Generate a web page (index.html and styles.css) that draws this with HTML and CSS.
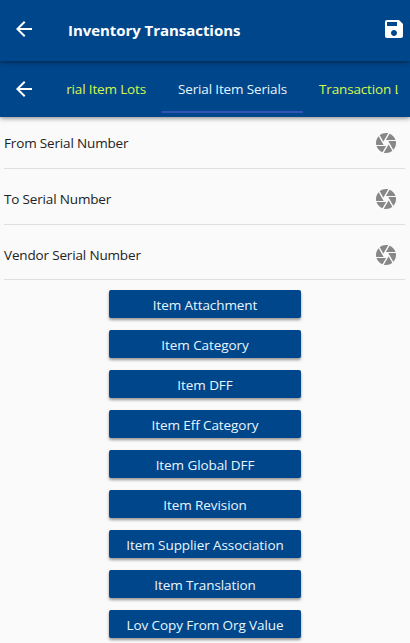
FILE: index.html
```html
<!DOCTYPE html>
<html lang="en">
<head>
<meta charset="utf-8">
<title>Inventory Transactions</title>
<link rel="stylesheet" href="styles.css">
</head>
<body>
<svg class="defs" width="0" height="0">
  <symbol id="back" viewBox="0 0 24 24"><path d="M20 11H7.83l5.59-5.59L12 4l-8 8 8 8 1.41-1.41L7.83 13H20v-2z"/></symbol>
  <symbol id="save" viewBox="0 0 24 24"><path d="M17 3H5c-1.11 0-2 .9-2 2v14c0 1.100.890 2 2 2h14c1.100 0 2-.9 2-2V7l-4-4zm-5 16c-1.660 0-3-1.340-3-3s1.340-3 3-3 3 1.340 3 3-1.340 3-3 3zm3-10H5V5h10v4z"/></symbol>
  <symbol id="camera" viewBox="0 0 24 24"><path d="M9.4 10.5l4.77-8.26C13.47 2.09 12.75 2 12 2c-2.4 0-4.6.85-6.32 2.25l3.66 6.35.06-.1zM21.54 9c-.92-2.92-3.15-5.26-6-6.340L11.88 9h9.660zm.26 1h-7.490l.29.5 4.760 8.250C21 16.970 22 14.610 22 12c0-.69-.07-1.350-.2-2zM8.540 12l-3.900-6.750C3.010 7.030 2 9.390 2 12c0 .69.07 1.350.2 2h7.490l-1.150-2zm-6.080 3c.92 2.920 3.150 5.260 6 6.340L12.120 15H2.460zm11.270 0l-3.900 6.760c.7.15 1.420.24 2.170.24 2.400 0 4.600-.85 6.320-2.250l-3.660-6.350-.93 1.600z"/></symbol>
</svg>
<header class="app-bar">
  <svg class="icon"><use href="#back"/></svg>
  <h1 class="title">Inventory Transactions</h1>
  <svg class="icon save"><use href="#save"/></svg>
</header>
<nav class="tab-bar">
  <svg class="icon"><use href="#back"/></svg>
  <div class="tabs">
    <div class="tab lots"><span>Serial Item Lots</span></div>
    <div class="tab active"><span>Serial Item Serials</span></div>
    <div class="tab transaction"><span>Transaction Lots</span></div>
  </div>
</nav>
<main>
  <div class="field"><span>From Serial Number</span><svg class="icon"><use href="#camera"/></svg></div>
  <div class="field"><span>To Serial Number</span><svg class="icon"><use href="#camera"/></svg></div>
  <div class="field last"><span>Vendor Serial Number</span><svg class="icon"><use href="#camera"/></svg></div>
  <div class="actions">
    <button>Item Attachment</button>
    <button>Item Category</button>
    <button>Item DFF</button>
    <button>Item Eff Category</button>
    <button>Item Global DFF</button>
    <button>Item Revision</button>
    <button>Item Supplier Association</button>
    <button>Item Translation</button>
    <button>Lov Copy From Org Value</button>
  </div>
</main>
</body>
</html>
```
FILE: styles.css
```css
* { box-sizing: border-box; }
html { overflow: hidden; }
body {
  margin: 0;
  height: 643px;
  overflow: hidden;
  background: #fafafa;
  color: #222;
  font: 13.5px/20px "Segoe UI", "Open Sans", sans-serif;
}
.defs { position: absolute; }
.icon { width: 24px; height: 24px; flex: none; fill: currentColor; }
.app-bar, .tab-bar {
  display: flex;
  align-items: center;
  background: #00468b;
  color: #fff;
}
.app-bar {
  position: relative;
  z-index: 1;
  height: 61px;
  padding: 0 4px 3px 12px;
  box-shadow: 0 1px 5px rgba(0, 0, 0, .5);
}
.title {
  flex: 1;
  margin: 2px 0 0 32px;
  font-size: 15px;
  line-height: 22px;
  font-weight: 700;
  letter-spacing: -.05px;
}
.tab-bar {
  position: relative;
  height: 56px;
  padding: 0 12px;
  box-shadow: 0 1px 5px rgba(0, 0, 0, .5);
}
.tabs {
  display: flex;
  justify-content: flex-end;
  width: 331px;
  height: 56px;
  margin-left: 31px;
  overflow: hidden;
}
.tab {
  flex: none;
  height: 52px;
  padding-top: 18px;
  color: #d6f84c;
  white-space: nowrap;
  letter-spacing: -.15px;
}
.lots { padding-right: 16px; }
.active {
  width: 141px;
  color: #e6f5ff;
  text-align: center;
  border-bottom: 2px solid #3451b5;
}
.transaction { width: 95px; padding-left: 16px; overflow: hidden; }
.field {
  display: flex;
  align-items: center;
  justify-content: space-between;
  height: 56px;
  margin: 0 5px 0 4px;
  padding: 5px 7px 0 0;
  border-bottom: 1px solid #dfdfdf;
  color: #222;
  letter-spacing: -.16px;
}
.field:first-child { height: 52px; padding-top: 1px; }
.field.last { height: 55px; }
.field .icon { color: #878787; }
.actions {
  display: flex;
  flex-direction: column;
  align-items: center;
  gap: 12px;
  padding-top: 10px;
}
button {
  width: 192px;
  height: 28px;
  padding: 2px 0 0;
  border: 0;
  border-radius: 2px;
  background: #00468b;
  color: #e8f6ff;
  font: inherit;
  letter-spacing: -.08px;
  white-space: nowrap;
  box-shadow: 0 2px 3px rgba(0, 0, 0, .4);
}
```
